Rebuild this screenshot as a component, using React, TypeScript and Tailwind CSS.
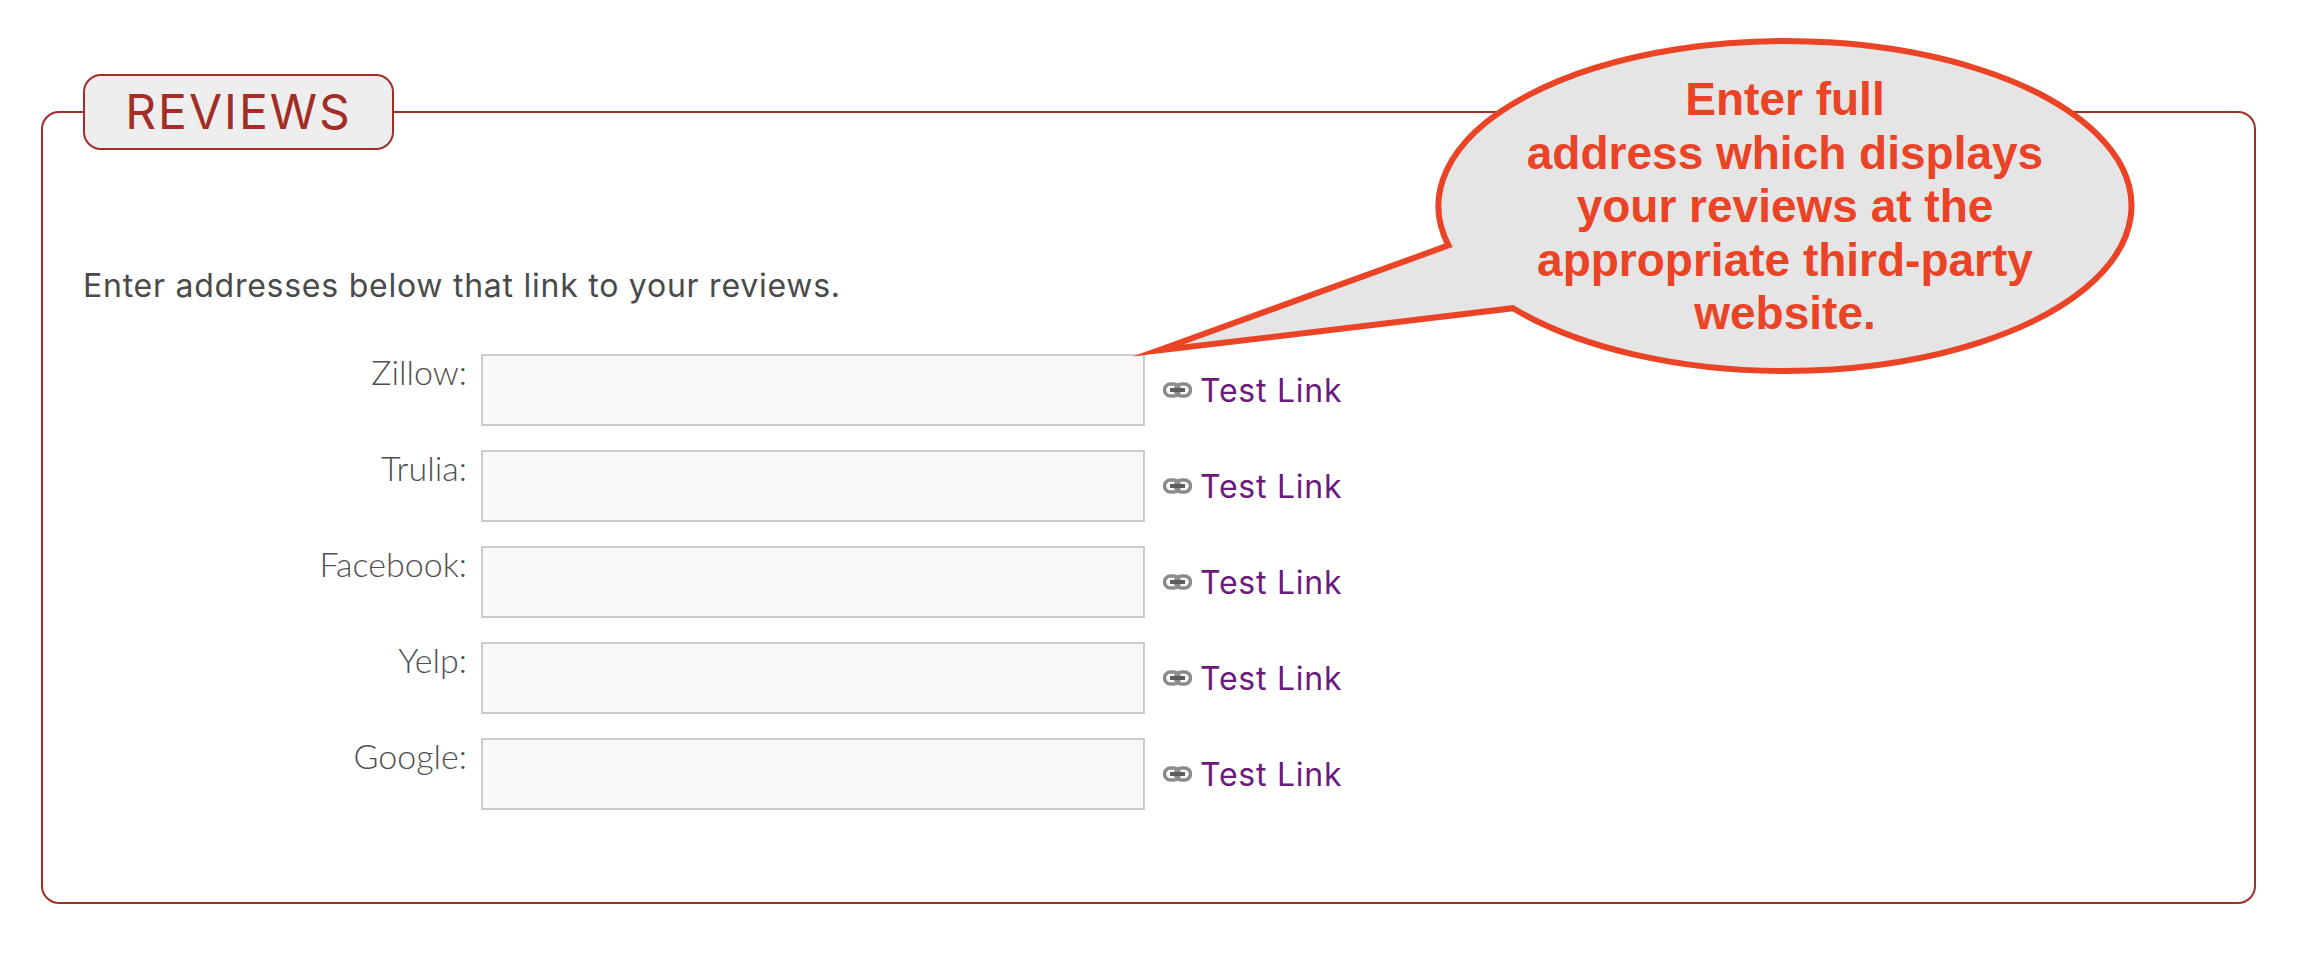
const sites = ["Zillow", "Trulia", "Facebook", "Yelp", "Google"];

function LinkIcon() {
  return (
    <svg width="29" height="16" viewBox="0 0 29 16" className="ml-[18px] shrink-0 blur-[0.7px]">
      <rect x="1.5" y="2" width="15" height="12" rx="6" fill="none" stroke="#8c8c8c" strokeWidth="3.5" />
      <rect x="12.5" y="2" width="15" height="12" rx="6" fill="none" stroke="#8c8c8c" strokeWidth="3.5" />
      <rect x="7" y="6" width="15" height="4" fill="#5c5c5c" />
    </svg>
  );
}

function Callout() {
  return (
    <div className="absolute left-[1125px] top-[35px] h-[345px] w-[1015px]">
      <svg width="1015" height="345" viewBox="0 0 1015 345" className="absolute inset-0">
        <path
          d="M33 315.5 L323.5 210.4 A346.5 165 0 1 1 388 273.2 Z"
          fill="#e5e5e5"
          stroke="#ea4325"
          strokeWidth="6"
          strokeLinejoin="miter"
          strokeMiterlimit="12"
        />
      </svg>
      <div className="absolute left-[310px] top-[38px] w-[700px] text-center font-['Liberation_Sans',Arial,sans-serif] text-[46px] font-bold leading-[53.5px] text-[#ea4325]">
        <div>Enter full</div>
        <div>address which displays</div>
        <div>your reviews at the</div>
        <div>appropriate third-party</div>
        <div>website.</div>
      </div>
    </div>
  );
}

export default function App() {
  return (
    <div className="relative h-[964px] bg-white pl-[41px] pr-[46px] pt-[74px] font-['Inter',sans-serif]">
      <fieldset className="rounded-[18px] border-2 border-[#a32d27] pb-[92px] pl-[40px]">
        <legend className="flex h-[76px] w-[311px] items-center justify-center rounded-[18px] border-2 border-[#a32d27] bg-[#eeeeee] text-[48px] tracking-[2px] text-[#a32d27]">
          REVIEWS
        </legend>
        <p className="mt-[114px] text-[32px] leading-[44px] tracking-[0.75px] text-[#4a4a4a]">
          Enter addresses below that link to your reviews.
        </p>
        <div className="mt-[46px] flex flex-col gap-[24px]">
          {sites.map((site) => (
            <div key={site} className="flex h-[72px] items-center">
              <label className="w-[384px] self-start text-right font-['Lato',sans-serif] text-[34px] font-light leading-[36px] text-[#4f4f4f]">
                {site}:
              </label>
              <input
                type="text"
                className="ml-[14px] h-[72px] w-[664px] border-2 border-[#cccccc] bg-[#f9f9f9]"
              />
              <LinkIcon />
              <a className="ml-[8px] pt-[2px] text-[32px] leading-[40px] tracking-[0.75px] text-[#6b1a7d]">Test Link</a>
            </div>
          ))}
        </div>
      </fieldset>
      <Callout />
    </div>
  );
}
